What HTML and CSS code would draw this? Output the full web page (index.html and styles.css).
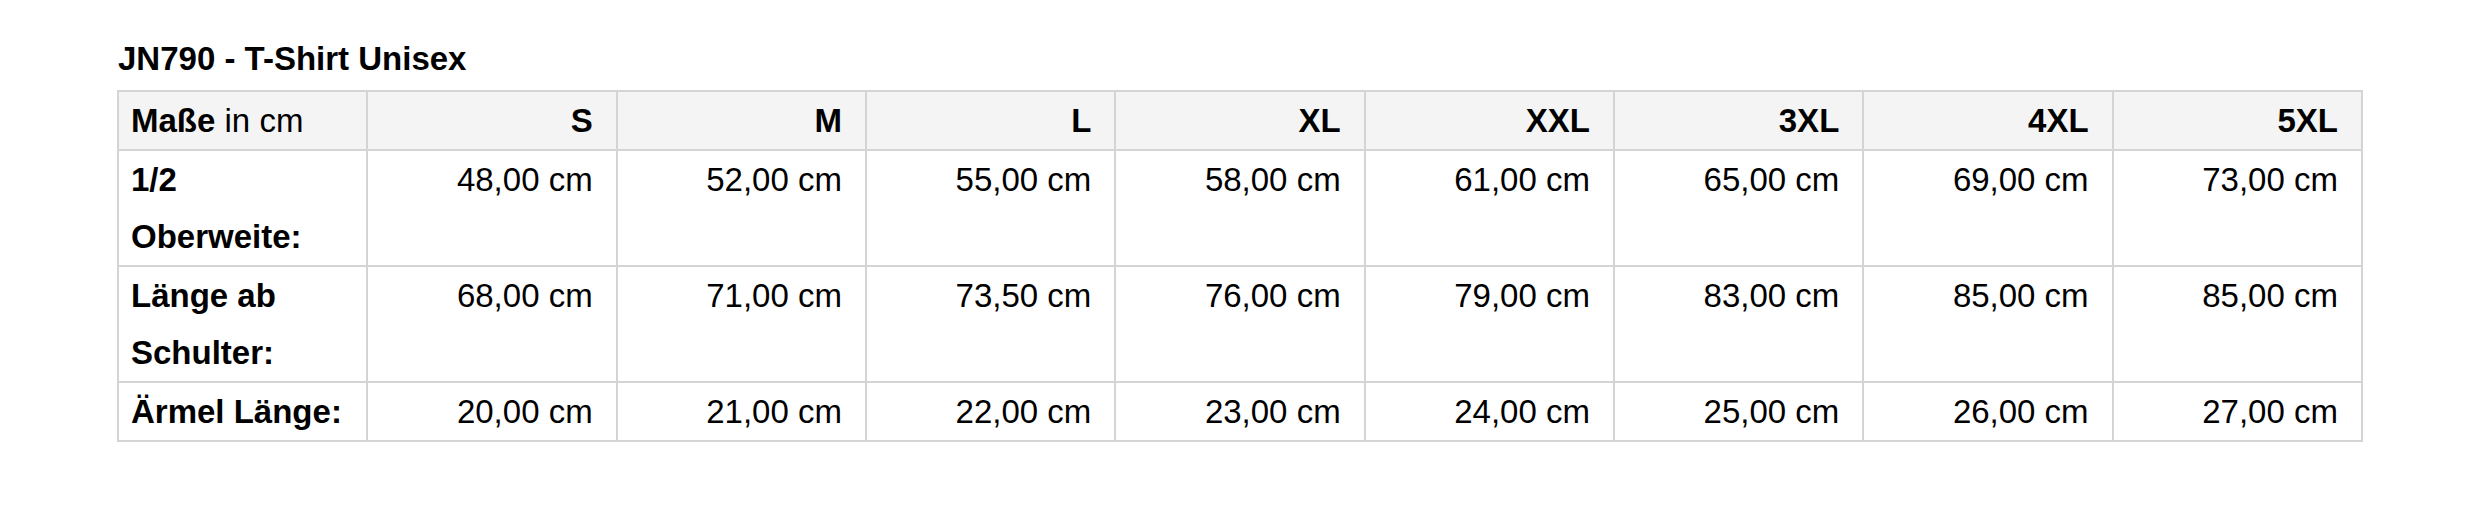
FILE: index.html
```html
<!DOCTYPE html>
<html lang="de">
<head>
<meta charset="utf-8">
<title>JN790 - T-Shirt Unisex</title>
<link rel="stylesheet" href="styles.css">
</head>
<body>
<div class="page">
  <h2 class="title">JN790 - T-Shirt Unisex</h2>
  <table class="sizes">
    <thead>
      <tr>
        <th class="label"><strong>Maße</strong> in cm</th>
        <th>S</th><th>M</th><th>L</th><th>XL</th><th>XXL</th><th>3XL</th><th>4XL</th><th>5XL</th>
      </tr>
    </thead>
    <tbody>
      <tr>
        <td class="label">1/2 Oberweite:</td>
        <td>48,00 cm</td><td>52,00 cm</td><td>55,00 cm</td><td>58,00 cm</td><td>61,00 cm</td><td>65,00 cm</td><td>69,00 cm</td><td>73,00 cm</td>
      </tr>
      <tr>
        <td class="label">Länge ab Schulter:</td>
        <td>68,00 cm</td><td>71,00 cm</td><td>73,50 cm</td><td>76,00 cm</td><td>79,00 cm</td><td>83,00 cm</td><td>85,00 cm</td><td>85,00 cm</td>
      </tr>
      <tr>
        <td class="label">Ärmel Länge:</td>
        <td>20,00 cm</td><td>21,00 cm</td><td>22,00 cm</td><td>23,00 cm</td><td>24,00 cm</td><td>25,00 cm</td><td>26,00 cm</td><td>27,00 cm</td>
      </tr>
    </tbody>
  </table>
</div>
</body>
</html>
```

FILE: styles.css
```css
html, body {
  margin: 0;
  padding: 0;
  background: #ffffff;
}

.page {
  padding: 39px 0 0 117px;
  font-family: "Liberation Sans", Arial, sans-serif;
  color: #000000;
}

.title {
  margin: 0 0 11px 1px;
  font-size: 33px;
  line-height: 40px;
  font-weight: bold;
}

.sizes {
  width: 2246px;
  table-layout: fixed;
  border-collapse: collapse;
  font-size: 33px;
  line-height: 57px;
}

.sizes th,
.sizes td {
  border: 2px solid #d4d4d4;
  padding: 0 23px 0 12px;
  text-align: right;
  vertical-align: top;
}

.sizes th {
  background: #f4f4f4;
  font-weight: bold;
}

.sizes th.label {
  font-weight: normal;
  text-align: left;
}

.sizes td.label {
  font-weight: bold;
  text-align: left;
}
```
